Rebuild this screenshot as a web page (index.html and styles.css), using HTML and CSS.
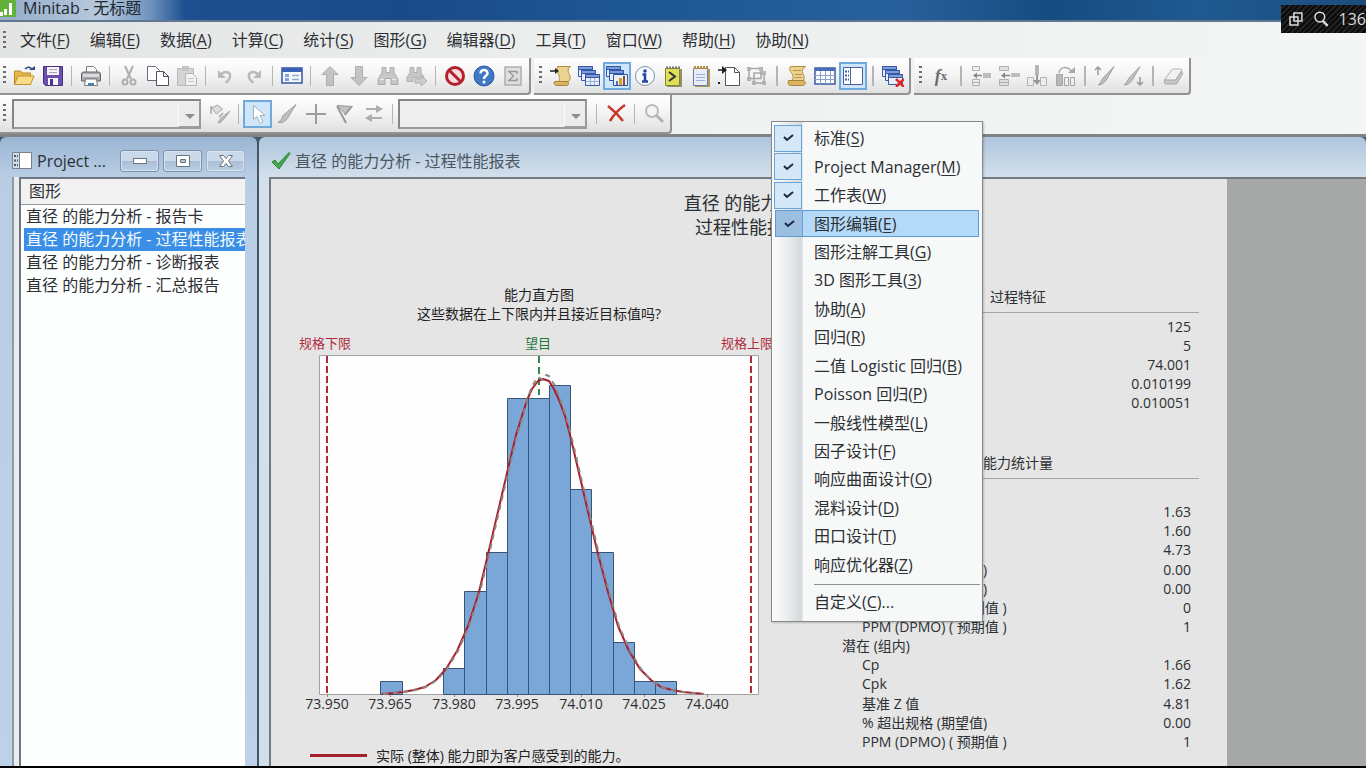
FILE: index.html
```html
<!DOCTYPE html>
<html lang="zh-CN">
<head>
<meta charset="utf-8">
<title>Minitab - 无标题</title>
<link rel="stylesheet" href="styles.css">
</head>
<body>
<header class="titlebar">
  <svg class="logo" width="17" height="20" viewBox="0 0 17 20"><path fill="#62b13c" d="M0 0h16v17H0z"/><path fill="#fff" d="M0 12h3v4H0zM4 9h3v6H4zM9 3h3v12H9z"/></svg>
  <h1 class="app-title">Minitab - 无标题</h1>
</header>

<nav class="menubar grip" aria-label="主菜单">
  <button>文件(<u>F</u>)</button>
  <button>编辑(<u>E</u>)</button>
  <button>数据(<u>A</u>)</button>
  <button>计算(<u>C</u>)</button>
  <button>统计(<u>S</u>)</button>
  <button>图形(<u>G</u>)</button>
  <button>编辑器(<u>D</u>)</button>
  <button>工具(<u>T</u>)</button>
  <button>窗口(<u>W</u>)</button>
  <button>帮助(<u>H</u>)</button>
  <button>协助(<u>N</u>)</button>
</nav>

<div class="dock">
  <div class="dock-row">
    <div class="toolbar wide grip" role="toolbar" aria-label="标准">
      <button class="tool" aria-label="打开"><svg viewBox="0 0 22 22"><path fill="#e9b84d" stroke="#b98527" d="M1.500 19.500V6h6l2 2h8v4"/><path fill="#fbdc86" stroke="#c18f30" d="M1.500 19.500 5 11h16l-3.500 8.500z"/><path fill="none" stroke="#35507f" stroke-width="1.500" d="M12 4c3-3 6-2 7 1"/><path fill="#35507f" d="M16 5h6v-4z"/></svg></button>
      <button class="tool" aria-label="保存"><svg viewBox="0 0 22 22"><path fill="#6a4fae" stroke="#45307f" d="M1.500 1.500h19v19h-17l-2-2z"/><path fill="#f4f4fa" d="M5 2h12v8H5zM6 13h10v7H6z"/><path stroke="#a9a3c4" d="M7 4.500h8M7 7.500h8"/><path fill="#4b368c" d="M8 14h3v6H8z"/></svg></button>
      <span class="sep"></span>
      <button class="tool" aria-label="打印"><svg viewBox="0 0 22 22"><path fill="#fff" stroke="#7c7c80" d="M6.500 8V1.500h7l3 3V8"/><path fill="#a7a8ac" stroke="#66676b" d="M1.500 9q0-2 2-2h15q2 0 2 2v7h-19z"/><path fill="#d9dadd" d="M3 9h16v3H3z"/><path fill="#fff" stroke="#77787c" d="M5.500 14h11l1 6.500h-13z"/><path stroke="#3c83b8" stroke-width="2" d="M8 19h6"/></svg></button>
      <span class="sep"></span>
      <button class="tool off" aria-label="剪切"><svg viewBox="0 0 22 22"><g fill="none" stroke="#a4a4a4" stroke-width="2"><path d="M7 1l6 13M15 1 9 14"/><circle cx="7" cy="17" r="2.500"/><circle cx="15" cy="17" r="2.500"/></g></svg></button>
      <button class="tool" aria-label="复制"><svg viewBox="0 0 22 22"><path fill="#fff" stroke="#686c7a" d="M.500 1.500h8l4 4v10H.500z"/><path fill="#fff" stroke="#4c5160" d="M9.500 6.500h7l5 5v9h-12z"/><path fill="none" stroke="#4c5160" d="M16.500 6.500v5h5"/></svg></button>
      <button class="tool off" aria-label="粘贴"><svg viewBox="0 0 22 22"><path fill="#d0d0d0" stroke="#b2b2b2" d="M1.500 3.500h16v17h-16z"/><path fill="#bdbdbd" d="M6 1h7v5H6z"/><path fill="#f4f4f4" stroke="#ababab" d="M9.500 8.500h7l4 4v8h-11z"/><path stroke="#bbb" d="M12 13.500h6M12 16.500h6"/></svg></button>
      <span class="sep"></span>
      <button class="tool off" aria-label="撤消"><svg viewBox="0 0 22 22"><path fill="none" stroke="#b0b0b0" stroke-width="2.500" d="M6 10c5-5 11-3 10 2-.500 3-3 4-4 6"/><path fill="#b0b0b0" d="M4 5v8h8z"/></svg></button>
      <button class="tool off" aria-label="重做"><svg viewBox="0 0 22 22"><path fill="none" stroke="#b0b0b0" stroke-width="2.500" d="M16 10c-5-5-11-3-10 2 .500 3 3 4 4 6"/><path fill="#b0b0b0" d="M18 5v8h-8z"/></svg></button>
      <span class="sep"></span>
      <button class="tool" aria-label="对话框"><svg viewBox="0 0 22 22"><path fill="#f5f8fd" stroke="#3455a2" stroke-width="1.500" d="M1 3h20v15H1z"/><path fill="#3c60b4" d="M1 3h20v4H1z"/><path stroke="#86a4dc" stroke-width="3" d="M4 10.500h4M4 14.500h4"/><path stroke="#92a8d0" stroke-width="1.500" d="M11 10.500h7M11 14.500h7"/></svg></button>
      <span class="sep"></span>
      <button class="tool off" aria-label="上一个"><svg viewBox="0 0 22 22"><path fill="#bcbcbc" stroke="#a2a2a2" d="M11 1.500l8 8h-4.500v11h-7v-11H3z"/></svg></button>
      <button class="tool off" aria-label="下一个"><svg viewBox="0 0 22 22"><path fill="#bcbcbc" stroke="#a2a2a2" d="M11 20.500l8-8h-4.500v-11h-7v11H3z"/></svg></button>
      <button class="tool off" aria-label="查找"><svg viewBox="0 0 22 22"><path fill="#c0c0c0" stroke="#a0a0a0" d="M5 2.500h4v5h4v-5h4v5l4 7v5h-7v-6H8v6H1v-5l4-7z"/><path stroke="#eee" d="M3 14.500h4M15 14.500h4"/></svg></button>
      <button class="tool off" aria-label="查找下一个"><svg viewBox="0 0 22 22"><path fill="#c0c0c0" stroke="#a5a5a5" d="M4 2.500h4v5h3v-5h4v5l3 5v4h-6v-4H7v4H1v-4l3-5z"/><path fill="#c9c9c9" stroke="#a5a5a5" d="M9 14h6v-3l6 5-6 5v-3H9z"/></svg></button>
      <span class="sep"></span>
      <button class="tool" aria-label="取消"><svg viewBox="0 0 22 22"><circle cx="11" cy="11" r="8.500" fill="#f7dede" stroke="#b3202c" stroke-width="3"/><path stroke="#b3202c" stroke-width="3" d="M5 5l12 12"/></svg></button>
      <button class="tool" aria-label="帮助"><svg viewBox="0 0 22 22"><circle cx="11" cy="11" r="10" fill="#3f78c5" stroke="#2b5799"/><path fill="none" stroke="#fff" stroke-width="2.500" d="M7.500 8.500c0-5 7.500-4.500 7 0-.300 2.300-3.500 2.500-3.500 5.500"/><circle cx="11" cy="17" r="1.500" fill="#fff"/></svg></button>
      <button class="tool off" aria-label="统计指南"><svg viewBox="0 0 22 22"><path fill="#dcdcdc" stroke="#a3a3a3" stroke-width="1.500" d="M3 2h16v18H3z"/><path fill="none" stroke="#8b8b8b" stroke-width="1.500" d="M15 9V6.500H7l4.500 4.500L7 15.500h8V13"/></svg></button>
    </div>
    <div class="toolbar grip" role="toolbar" aria-label="Project Manager">
      <button class="tool" aria-label="会话"><svg viewBox="0 0 22 22"><path fill="#ecd391" stroke="#b08b3d" d="M7.500 1.500h13c-3 2-3 5-1 8 1 3 1 5-1 7h-10c2-3 1-5 0-7-1-3-2-5-1-8z"/><path fill="#d9b563" stroke="#a98335" d="M4.500 16.500h13c2 2 1 4-1 4h-10c-2 0-3-2-2-4z"/><path stroke="#222" stroke-width="1.500" d="M0 6h7"/><path fill="#222" d="M5 3l4 3-4 3z"/></svg></button>
      <button class="tool" aria-label="工作表"><svg viewBox="0 0 22 22"><g fill="#e8effb" stroke="#3558a8"><path d="M.500 1.500h14v10H.500z"/><path fill="#7f9cd8" d="M.500 1.500h14v3H.500z"/><path d="M3.500 5.500h14v10h-14z"/><path fill="#7f9cd8" d="M3.500 5.500h14v3h-14z"/><path d="M7.500 9.500h14v11h-14z"/><path fill="#7f9cd8" d="M7.500 9.500h14v3h-14z"/></g><path stroke="#9ab0dc" d="M8 16.500h13M12.500 13v7M16.500 13v7"/></svg></button>
      <button class="tool on" aria-label="图形"><svg viewBox="0 0 22 22"><g fill="#e8effb" stroke="#2f56a4"><path d="M.500 1.500h14v10H.500z"/><path fill="#7f9cd8" d="M.500 1.500h14v3H.500z"/><path d="M3.500 5.500h14v10h-14z"/><path fill="#7f9cd8" d="M3.500 5.500h14v3h-14z"/><path d="M7.500 9.500h14v11h-14z"/></g><path fill="#4a70c0" d="M10 16h2v4h-2z"/><path fill="#e09b20" d="M13 13h3v7h-3z"/><path fill="#8c5030" d="M17 11h2v9h-2z"/></svg></button>
      <button class="tool" aria-label="信息"><svg viewBox="0 0 22 22"><circle cx="11" cy="11" r="9.500" fill="#f6f9fe" stroke="#8290a9"/><circle cx="11" cy="6" r="1.800" fill="#24459c"/><path fill="none" stroke="#24459c" stroke-width="2.500" d="M8.500 9.500H11V16M8 16.500h6"/></svg></button>
      <button class="tool" aria-label="历史记录"><svg viewBox="0 0 22 22"><path fill="#8f8f6e" d="M5 4h15v18H5z"/><path fill="#dfe05a" stroke="#85852e" d="M3.500 3.500h14v17h-14z"/><path stroke="#777" stroke-width="2" stroke-dasharray="2 1" d="M4 2.500h14"/><path fill="none" stroke="#333" stroke-width="2" d="M7 7l6 4.500L7 16"/></svg></button>
      <button class="tool" aria-label="报表板"><svg viewBox="0 0 22 22"><path fill="#b19a55" d="M5 4h15v18H5z"/><path fill="#e8edf8" stroke="#6c7ca6" d="M3.500 3.500h14v17h-14z"/><path stroke="#b68c36" stroke-width="3" stroke-dasharray="2 1" d="M4 2.500h14"/><path stroke="#9cb0da" d="M6 9.500h9M6 12.500h9M6 15.500h9"/></svg></button>
      <button class="tool" aria-label="相关文档"><svg viewBox="0 0 22 22"><path fill="#fff" stroke="#555" d="M7.500 2.500h9l5 5v13h-14z"/><path fill="none" stroke="#555" d="M16.500 2.500v5h5"/><path stroke="#222" stroke-width="1.500" d="M0 5h6"/><path fill="#222" d="M4 1l5 4-5 4zM0 17h2v2H0z"/></svg></button>
      <button class="tool off" aria-label="组合"><svg viewBox="0 0 22 22"><g fill="none" stroke="#9b9b9b" stroke-width="1.500"><path d="M3 3.500h12v10H3zM8 8h10v10H8z"/></g><path fill="#aaa" d="M1 2h4v4H1zM13 2h4v4h-4zM1 12h4v4H1zM16 6h4v4h-4zM16 16h4v4h-4zM6 16h4v4H6z"/></svg></button>
      <span class="sep"></span>
      <button class="tool" aria-label="显示会话"><svg viewBox="0 0 22 22"><path fill="#ecd391" stroke="#b08b3d" d="M4.500 1.500h15c-3 2-4 5-2 8 1 3 1 5-1 7h-11c2-3 2-5 1-7-2-3-4-5-2-8z"/><path fill="#d9b563" stroke="#a98335" d="M2.500 15.500h15c4 2 1 5-1 5h-12c-2 0-3-3-2-5z"/><path stroke="#b9934a" d="M7 5.500h8M9 9.500h7M9 12.500h7"/></svg></button>
      <button class="tool" aria-label="显示工作表"><svg viewBox="0 0 22 22"><path fill="#fbfcff" stroke="#3b5aa0" stroke-width="1.500" d="M1 3h20v16H1z"/><path fill="#4a6cb6" d="M1 3h20v3H1z"/><path stroke="#8fa2cc" d="M1 10.500h20M1 14.500h20M6.500 6v13M11.500 6v13M16.500 6v13"/></svg></button>
      <button class="tool on" aria-label="显示项目"><svg viewBox="0 0 22 22"><path fill="#fff" stroke="#4a6596" d="M1.500 2.500h19v17h-19z"/><path fill="none" stroke="#4a6596" d="M8.500 2.500v17"/><path stroke="#3b61ae" stroke-width="2" stroke-dasharray="2 1" d="M3 6.500h4M3 10.500h4M3 14.500h4"/></svg></button>
      <span class="sep"></span>
      <button class="tool" aria-label="关闭所有图形"><svg viewBox="0 0 22 22"><g fill="#e8effb" stroke="#3558a8"><path d="M.500 1.500h14v10H.500z"/><path fill="#7f9cd8" d="M.500 1.500h14v3H.500z"/><path d="M3.500 5.500h14v10h-14z"/><path fill="#7f9cd8" d="M3.500 5.500h14v3h-14z"/><path d="M6.500 9.500h14v10h-14z"/><path fill="#7f9cd8" d="M6.500 9.500h14v3h-14z"/></g><path stroke="#dc2a2a" stroke-width="2.500" d="M14 14l8 8M22 14l-8 8"/></svg></button>
    </div>
    <div class="toolbar grip" role="toolbar" aria-label="工作表">
      <button class="tool off fx" aria-label="公式"><i>f</i><sub>x</sub></button>
      <span class="sep"></span>
      <button class="tool off" aria-label="插入单元格"><svg viewBox="0 0 22 22"><path fill="#eee" stroke="#a5a5a5" d="M2.500 1.500h7v4h-7zM2.500 14.500h7v3h-7zM2.500 17.500h7v3h-7z"/><path fill="#b5b5b5" d="M13 8h8v5h-8z"/><path stroke="#777" stroke-width="1.500" d="M5 10.500h7"/><path fill="#777" d="M3 10.500l4-3v6z"/></svg></button>
      <button class="tool off" aria-label="插入行"><svg viewBox="0 0 22 22"><path fill="#ddd" stroke="#a5a5a5" d="M1.500 1.500h9v4h-9zM1.500 14.500h9v6h-9zM1.500 17.500h9"/><path fill="#b5b5b5" d="M13 8h9v4h-9z"/><path stroke="#777" stroke-width="1.500" d="M5 10.500h7"/><path fill="#777" d="M3 10.500l4-3v6z"/></svg></button>
      <button class="tool off" aria-label="插入列"><svg viewBox="0 0 22 22"><path fill="#eee" stroke="#aaa" d="M1.500 12.500h6v8h-6zM14.500 12.500h6v8h-6z"/><path fill="#aaa" d="M9 0h4v10H9z"/><path fill="#888" d="M10 10h2v7h-2zM7 15h8l-4 5z"/></svg></button>
      <button class="tool off" aria-label="移动列"><svg viewBox="0 0 22 22"><path fill="#b0b0b0" stroke="#999" d="M2.500 9.500h6v11h-6z"/><path fill="#eee" stroke="#999" d="M10.500 12.500h4v8h-4zM16.500 12.500h4v8h-4z"/><path fill="none" stroke="#999" stroke-width="1.500" d="M5 8c1-7 9-7 13-1"/><path fill="#999" d="M14 8h7V2z"/></svg></button>
      <span class="sep"></span>
      <button class="tool off" aria-label="上一个刷亮行"><svg viewBox="0 0 22 22"><path fill="#b7b7b7" stroke="#929292" d="M20 1.500l-8 14q-4 5-8 4.500 3-2 5-7z"/><path fill="none" stroke="#8b8b8b" stroke-width="1.500" d="M4 10V2M1 5l3-3 3 3"/></svg></button>
      <button class="tool off" aria-label="下一个刷亮行"><svg viewBox="0 0 22 22"><path fill="#b7b7b7" stroke="#929292" d="M18 1.500l-8 14q-4 5-8 4.500 3-2 5-7z"/><path fill="none" stroke="#8b8b8b" stroke-width="1.500" d="M18 12v8M15 17l3 3 3-3"/></svg></button>
      <span class="sep"></span>
      <button class="tool off" aria-label="清除"><svg viewBox="0 0 22 22"><path fill="#f2f2f2" stroke="#a8a8a8" d="M2.500 15l7-10q1-1 3-1h6q2 0 1 2l-6 10z"/><path fill="#c2c2c2" stroke="#999" d="M2.500 15h11l6-9 1 3-6 10h-11q-2-1-1-4z"/></svg></button>
    </div>
  </div>
  <div class="dock-row">
    <div class="toolbar wide low grip" role="toolbar" aria-label="图形编辑">
      <span class="combo"><select aria-label="图形项"><option></option></select></span>
      <button class="tool off" aria-label="编辑属性"><svg viewBox="0 0 22 22"><path fill="#d8d8d8" stroke="#999" d="M2.500 5l6-3 5 4-6 5z"/><path stroke="#999" stroke-width="1.500" d="M2 3v8M14 10l-4 4"/><path fill="#b5b5b5" stroke="#999" d="M21 8l-6 8q-3 4-6 4l3-5z"/></svg></button>
      <span class="sep"></span>
      <button class="tool on" aria-label="选择"><svg viewBox="0 0 22 22"><path fill="#fff" stroke="#9fb1c4" d="M6.500 2.500v14l3.500-3 3 7 3-1.500-3-6.500h5z"/></svg></button>
      <button class="tool off" aria-label="刷亮"><svg viewBox="0 0 22 22"><path fill="#b7b7b7" stroke="#929292" d="M20 1.500l-8 13q-4 6-10 5 4-2 5-7z"/></svg></button>
      <button class="tool off" aria-label="十字准线"><svg viewBox="0 0 22 22"><path stroke="#8f8f8f" stroke-width="2" d="M11 1v20M1 11h20"/></svg></button>
      <button class="tool off" aria-label="植旗"><svg viewBox="0 0 22 22"><path fill="#b9b9b9" stroke="#8b8b8b" d="M3.500 2.500l15 1-7 8z"/><path stroke="#8b8b8b" stroke-width="2" d="M3 3l9 17M17 4l-6 8"/></svg></button>
      <button class="tool off" aria-label="更新"><svg viewBox="0 0 22 22"><path stroke="#a2a2a2" stroke-width="2" d="M3 6h12M7 15h12"/><path fill="#a2a2a2" d="M13 2l7 4-7 4zM9 11l-7 4 7 4z"/></svg></button>
      <span class="sep"></span>
      <span class="combo"><select aria-label="标签"><option></option></select></span>
      <span class="sep"></span>
      <button class="tool" aria-label="删除"><svg viewBox="0 0 22 22"><path fill="none" stroke="#c9372b" stroke-width="2.500" d="M3 3q8 6 15 15M20 2Q11 8 5 18"/></svg></button>
      <span class="sep"></span>
      <button class="tool off" aria-label="缩放"><svg viewBox="0 0 22 22"><circle cx="9" cy="8" r="6" fill="#f4f4f4" stroke="#b2b2b2" stroke-width="2"/><path stroke="#a9a9a9" stroke-width="3" d="M13 12l7 7"/></svg></button>
    </div>
  </div>
</div>

<main class="workspace">
  <section class="window project" aria-label="Project Manager">
    <div class="caption">
      <svg width="20" height="17" viewBox="0 0 20 17"><path fill="#fff" stroke="#77808c" d="M.500.500h19v16H.500z"/><path fill="#d3dbe4" d="M1 1h6v15H1z"/><path stroke="#77808c" d="M7.500 0v17"/><path stroke="#4d5a6c" stroke-width="2" stroke-dasharray="2 1" d="M2 4h4M2 8.500h4M2 13h4"/></svg>
      <h2>Project ...</h2>
      <button aria-label="最小化"><svg width="16" height="8" viewBox="0 0 16 8"><path fill="#fff" stroke="#69747f" d="M1.500 1.500h13v5h-13z"/></svg></button>
      <button aria-label="最大化"><svg width="16" height="12" viewBox="0 0 16 12"><path fill="#fff" stroke="#69747f" d="M1.500.500h13v11h-13z"/><path fill="#b6c6d8" stroke="#69747f" d="M5.500 4.500h5v3h-5z"/></svg></button>
      <button aria-label="关闭"><svg width="16" height="12" viewBox="0 0 16 12"><path fill="#fff" stroke="#69747f" d="M1.500.500h4L8 3.500 10.500.500h4L10.500 6l4 5.500h-4L8 8.500l-2.500 3h-4l4-5.500z"/></svg></button>
    </div>
    <div class="list-frame">
      <div class="list">
        <h3>图形</h3>
        <ul>
          <li>直径 的能力分析 - 报告卡</li>
          <li class="selected">直径 的能力分析 - 过程性能报表</li>
          <li>直径 的能力分析 - 诊断报表</li>
          <li>直径 的能力分析 - 汇总报告</li>
        </ul>
      </div>
    </div>
  </section>

  <section class="window graph" aria-label="过程性能报表">
    <div class="caption">
      <svg width="20" height="18" viewBox="0 0 20 18"><path fill="#43a84a" stroke="#2c8838" d="M1 10l3-2 3 4L18 .500l1 1L8 17z"/></svg>
      <h2>直径 的能力分析 - 过程性能报表</h2>
    </div>
    <div class="canvas">
      <article class="page">
        <header class="report-title">直径 的能力分析<br>过程性能报表</header>
        <div class="report-body">
          <figure class="chart">
            <figcaption>能力直方图<br>这些数据在上下限内并且接近目标值吗?</figcaption>
            <svg class="plot" width="500" height="380" viewBox="289 333 500 380" role="img" aria-label="能力直方图">
              <g class="limit-text" text-anchor="middle"><text x="325" y="348">规格下限</text><text x="747" y="348">规格上限</text><text class="target-text" x="538" y="348">望目</text></g>
              <path fill="#fdfefd" stroke="#a3a3a3" d="M319.500 355.500h439v339h-439z"/>
              <path stroke="#8a8a8a" d="M327.500 694v3M390.500 694v3M454.500 694v3M517.500 694v3M581.500 694v3M644.500 694v3M707.500 694v3"/>
              <path stroke="#b02a3c" stroke-width="2" stroke-dasharray="7 3" d="M327 356v338M751 356v338"/>
              <path stroke="#2f8a4c" stroke-width="2" stroke-dasharray="7 4" d="M539 356v39"/>
              <g fill="#7ba6d8" stroke="#3a5573">
                <path d="M380.500 681.500h22v13h-22zM443.500 668.500h21v26h-21zM464.500 591.500h22v103h-22zM486.500 552.500h21v142h-21zM507.500 398.500h21v296h-21zM528.500 398.500h21v296h-21zM549.500 385.500h21v309h-21zM570.500 489.500h21v205h-21zM591.500 552.500h22v142h-22zM613.500 642.500h21v52h-21zM634.500 681.500h21v13h-21zM655.500 681.500h21v13h-21z"/>
              </g>
              <path fill="none" stroke="#a81f2c" stroke-width="2" stroke-linejoin="round" d="M382 694L393 693L403 692L414 690L425 687L436 680L446 669L457 651L468 626L479 592L489 550L500 503L511 456L516 435L522 416L527 400L532 389L538 381L543 379L549 381L554 389L559 400L565 416L570 435L575 456L586 503L597 550L608 592L618 626L629 651L640 669L651 680L661 687L672 690L683 692L694 693L704 694"/>
              <path fill="none" stroke="#8e8580" stroke-width="2" stroke-dasharray="5 5" stroke-linejoin="round" d="M383 694L394 693L404 692L415 690L426 687L437 680L447 669L458 651L469 626L480 592L490 550L501 503L512 456L517 435L523 416L527 400L532 386L538 377L543 380L546 375L549 376L555 386L560 399L566 416L571 435L576 456L587 503L598 550L609 592L619 626L630 651L641 669L651 680L661 687L672 690L683 692L694 693L704 694"/>
              <g class="axis-text" text-anchor="middle"><text x="327" y="709">73.950</text><text x="390" y="709">73.965</text><text x="454" y="709">73.980</text><text x="517" y="709">73.995</text><text x="581" y="709">74.010</text><text x="644" y="709">74.025</text><text x="707" y="709">74.040</text></g>
            </svg>
            <p class="legend"><span class="swatch"></span>实际 (整体) 能力即为客户感受到的能力。</p>
          </figure>
          <div class="stats">
            <table>
              <caption>过程特征</caption>
              <tr><td></td><td>125</td></tr>
              <tr><td></td><td>5</td></tr>
              <tr><td></td><td>74.001</td></tr>
              <tr><td></td><td>0.010199</td></tr>
              <tr><td></td><td>0.010051</td></tr>
            </table>
            <table class="capability">
              <caption>能力统计量</caption>
              <tr><td></td><td></td></tr>
              <tr><td></td><td>1.63</td></tr>
              <tr><td></td><td>1.60</td></tr>
              <tr><td></td><td>4.73</td></tr>
              <tr><th>% 超出规格 (观测值)</th><td>0.00</td></tr>
              <tr><th>% 超出规格 (期望值)</th><td>0.00</td></tr>
              <tr><th>PPM (DPMO) ( 观测值 )</th><td>0</td></tr>
              <tr><th>PPM (DPMO) ( 预期值 )</th><td>1</td></tr>
              <tr><th class="group">潜在 (组内)</th><td></td></tr>
              <tr><th>Cp</th><td>1.66</td></tr>
              <tr><th>Cpk</th><td>1.62</td></tr>
              <tr><th>基准 Z 值</th><td>4.81</td></tr>
              <tr><th>% 超出规格 (期望值)</th><td>0.00</td></tr>
              <tr><th>PPM (DPMO) ( 预期值 )</th><td>1</td></tr>
            </table>
          </div>
        </div>
      </article>
    </div>
  </section>
</main>

<div class="popup" role="menu" aria-label="工具栏">
  <div class="popup-items">
    <button role="menuitemcheckbox" aria-checked="true"><span class="check"><svg width="13" height="10" viewBox="0 0 13 10"><path fill="none" stroke="#1c2b40" stroke-width="2" d="M2 4l3 3 6-5"/></svg></span><span>标准(<u>S</u>)</span></button>
    <button role="menuitemcheckbox" aria-checked="true"><span class="check"><svg width="13" height="10" viewBox="0 0 13 10"><path fill="none" stroke="#1c2b40" stroke-width="2" d="M2 4l3 3 6-5"/></svg></span><span>Project Manager(<u>M</u>)</span></button>
    <button role="menuitemcheckbox" aria-checked="true"><span class="check"><svg width="13" height="10" viewBox="0 0 13 10"><path fill="none" stroke="#1c2b40" stroke-width="2" d="M2 4l3 3 6-5"/></svg></span><span>工作表(<u>W</u>)</span></button>
    <button class="hover" role="menuitemcheckbox" aria-checked="true"><span class="check"><svg width="13" height="10" viewBox="0 0 13 10"><path fill="none" stroke="#1c2b40" stroke-width="2" d="M2 4l3 3 6-5"/></svg></span><span>图形编辑(<u>E</u>)</span></button>
    <button role="menuitemcheckbox"><span>图形注解工具(<u>G</u>)</span></button>
    <button role="menuitemcheckbox"><span>3D 图形工具(<u>3</u>)</span></button>
    <button role="menuitemcheckbox"><span>协助(<u>A</u>)</span></button>
    <button role="menuitemcheckbox"><span>回归(<u>R</u>)</span></button>
    <button role="menuitemcheckbox"><span>二值 Logistic 回归(<u>B</u>)</span></button>
    <button role="menuitemcheckbox"><span>Poisson 回归(<u>P</u>)</span></button>
    <button role="menuitemcheckbox"><span>一般线性模型(<u>L</u>)</span></button>
    <button role="menuitemcheckbox"><span>因子设计(<u>F</u>)</span></button>
    <button role="menuitemcheckbox"><span>响应曲面设计(<u>O</u>)</span></button>
    <button role="menuitemcheckbox"><span>混料设计(<u>D</u>)</span></button>
    <button role="menuitemcheckbox"><span>田口设计(<u>T</u>)</span></button>
    <button role="menuitemcheckbox"><span>响应优化器(<u>Z</u>)</span></button>
  </div>
  <hr>
  <button class="customize" role="menuitem"><span>自定义(<u>C</u>)...</span></button>
</div>

<aside class="overlay">
  <svg width="16" height="16" viewBox="0 0 14 14"><path fill="none" stroke="#ddd" stroke-width="1.500" d="M5 1h8v8H5zM1 5h8v8H1z"/></svg>
  <svg width="18" height="18" viewBox="0 0 16 16"><circle cx="7" cy="6" r="5" fill="none" stroke="#ddd" stroke-width="1.500"/><path stroke="#ddd" stroke-width="2.500" d="M10 10l5 5"/></svg>
  <span>136</span>
</aside>
</body>
</html>
```
FILE: styles.css
```css
* { box-sizing: border-box; }

body {
  margin: 0;
  height: 100vh;
  overflow: hidden;
  display: flex;
  flex-direction: column;
  position: relative;
  border-bottom: 2px solid #000;
  background: #f1f2f2;
  color: #2c2f33;
  font: 16px/20px "Open Sans", "Noto Sans CJK SC", sans-serif;
}

button {
  margin: 0;
  padding: 0;
  border: 0;
  background: none;
  color: inherit;
  font: inherit;
  white-space: nowrap;
}

h1, h2, h3, p, ul, figure {
  margin: 0;
  padding: 0;
}

h1, h2, h3 {
  font-size: 16px;
  font-weight: 400;
}

u { text-underline-offset: 2px; }

/* Title bar */
.titlebar {
  flex: none;
  display: flex;
  height: 22px;
  overflow: hidden;
  border-bottom: 2px solid #5f7890;
  background:
    radial-gradient(ellipse at 232px 14px, #8fb9bf 0, #7fa9b800 24px),
    linear-gradient(90deg, #93acc9 0, #b7c9dc 100px, #6f94bd 150px, #1d4f90 185px, #1a4a88 400px, #1d5592 600px, #28609c 900px, #174c80 1050px, #1f5a91 1200px, #1c4c7c);
}

.logo { flex: none; }

.app-title {
  padding-left: 6px;
  color: #20262e;
  line-height: 16px;
}

/* Dotted handle at the left of each bar */
.grip::before {
  content: "";
  flex: none;
  width: 3px;
  height: 19px;
  margin: 0 5px;
  background: repeating-linear-gradient(#6d6d6d 0 2px, transparent 2px 5px);
}

.menubar {
  flex: none;
  display: flex;
  align-items: center;
  gap: 20px;
  height: 36px;
  background: linear-gradient(90deg, #e3e4e4, #ebecec 500px, #f4f5f5);
}

.menubar::before { margin: 0 -6px 0 3px; }

/* Toolbars */
.dock {
  flex: none;
  border-bottom: 3px solid #808387;
  background: linear-gradient(90deg, #e9eaea, #eff1f1 600px, #f4f5f5);
}

.dock-row { display: flex; gap: 3px; }

.toolbar {
  display: flex;
  align-items: center;
  height: 37px;
  padding-right: 2px;
  border-right: 2px solid #929292;
  border-bottom: 2px solid #929292;
  border-radius: 0 0 4px 0;
  background: linear-gradient(#fff, #f3f3f3 50%, #dfe0e0);
}

.toolbar.wide::before { margin: 0 3px; }

.low { height: 39px; }

.tool {
  flex: none;
  display: flex;
  align-items: center;
  justify-content: center;
  width: 28px;
  height: 28px;
}

.wide .tool { width: 29px; }

.tool svg { flex: none; width: 22px; height: 22px; }

.off { opacity: .85; }

.on {
  border: 2px solid #6fa9de;
  background: #cfe6fa;
}

.fx {
  color: #555;
  font: 700 18px/20px "Liberation Serif", serif;
}

.fx sub { font-size: 13px; }

.sep {
  flex: none;
  width: 2px;
  height: 20px;
  margin: 0 5px;
  background: #b5b5b5;
}

.wide .sep { width: 1px; margin: 0 4px; }

.combo {
  position: relative;
  width: 189px;
  height: 30px;
  margin: 0 4px 0 3px;
}

.sep + .combo { margin: 0 5px 0 1px; }

.combo select {
  width: 100%;
  height: 100%;
  appearance: none;
  border: 2px solid #9a9a9a;
  border-top-color: #858585;
  border-left-color: #858585;
  border-radius: 0;
  background: #eeeeee;
}

.combo::after {
  content: "";
  position: absolute;
  right: 6px;
  bottom: 10px;
  border: 5px solid transparent;
  border-top-color: #8d8d8d;
  border-bottom: 0;
}

.combo::before {
  content: "";
  position: absolute;
  inset: 4px 2px 2px auto;
  width: 20px;
  border-left: 1px solid #f9f9f9;
  border-bottom: 1px solid #a0a0a0;
  background: #ececec;
}

/* Document windows */
.workspace {
  flex: 1;
  min-height: 0;
  display: flex;
  gap: 2px;
  background: #435766;
}

.window {
  display: flex;
  flex-direction: column;
  min-height: 0;
  border-radius: 6px 6px 0 0;
}

.caption {
  flex: none;
  display: flex;
  align-items: center;
  height: 40px;
  padding-top: 7px;
}

.project {
  flex: none;
  width: 257px;
  padding: 0 12px;
  background: linear-gradient(#9ab5d3, #b9cee5 40px, #bdd2e9);
}

.project .caption { gap: 4px; }

.project h2 {
  flex: 1;
  padding-left: 1px;
  white-space: nowrap;
}

.project .caption button {
  display: flex;
  align-items: center;
  justify-content: center;
  width: 39px;
  height: 22px;
  border: 1px solid #7e91a8;
  border-radius: 3px;
  background: linear-gradient(#c9d9ea 50%, #a9bfd7 50%, #bdd0e4);
  box-shadow: inset 0 0 0 1px #d7e3f0;
}

.project .caption button:last-child { border-color: #a3b6cc; }

.list-frame {
  flex: 1;
  min-height: 0;
  padding-left: 5px;
  border-left: 2px solid #8e9aa6;
  background: #e9ecef;
}

.list {
  height: 100%;
  border-left: 2px solid #6e7780;
  border-top: 2px solid #6e7780;
  background: #fdfefe;
}

.list h3 {
  height: 26px;
  padding-left: 8px;
  border-bottom: 1px solid #9b9b9b;
  background: #f2f2f2;
  line-height: 25px;
}

.list ul { list-style: none; }

.list li {
  height: 23px;
  margin-left: 3px;
  padding-left: 2px;
  overflow: hidden;
  line-height: 23px;
  white-space: nowrap;
}

.list .selected { background: #3a8ee6; color: #f5faff; }

.graph {
  flex: 1;
  min-width: 0;
  padding-left: 10px;
  background: linear-gradient(#aec5dc, #d3e0ec 40px, #d0dfec);
}

.graph .caption { gap: 4px; padding-left: 2px; color: #4b5661; }

.canvas {
  flex: 1;
  min-height: 0;
  overflow: hidden;
  display: flex;
  border-top: 2px solid #74797d;
  border-left: 2px solid #74797d;
  background: #a6a8a7;
}

.page {
  flex: none;
  width: 956px;
  padding-top: 12px;
  background: #e4e5e4;
}

.report-title {
  text-align: center;
  font-size: 18px;
  line-height: 24px;
}

.report-body {
  display: flex;
  justify-content: space-between;
  padding: 46px 28px 0 18px;
  font-size: 14px;
  line-height: 19px;
}

.chart { width: 500px; color: #1f2123; }

.chart figcaption { text-align: center; }

.plot { display: block; margin-top: 10px; }

.limit-text { fill: #b02a3c; font-size: 13px; }

.target-text { fill: #1e7a3c; }

.axis-text { fill: #2c2f33; font-size: 14px; }

.legend {
  display: flex;
  align-items: center;
  gap: 9px;
  padding: 33px 0 0 21px;
}

.swatch { width: 57px; height: 3px; background: #a4202b; }

/* Statistics column */
.stats { width: 362px; padding-top: 2px; }

.stats table {
  width: 100%;
  border-collapse: collapse;
}

.stats caption {
  height: 26px;
  margin-bottom: 4px;
  border-bottom: 1px solid #a5a5a5;
}

.stats tr { height: 19px; }

.stats th, .stats td {
  padding: 0 8px 0 0;
  text-align: right;
  font-weight: 400;
}

.stats th { padding-left: 25px; text-align: left; }

.stats .group { padding-left: 5px; }

.stats .capability { height: 268px; margin-top: 41px; }

/* Toolbar picker menu */
.popup {
  position: absolute;
  left: 771px;
  top: 121px;
  width: 212px;
  padding: 2px 2px 3px;
  border: 1px solid #85898c;
  background: linear-gradient(90deg, #fcfdfd, #eceeef 14px, #d5d8da 30px, #f7f8f8 31px);
  box-shadow: 1px 1px 2px #0003;
}

.popup-items {
  display: grid;
  grid-auto-rows: 1fr;
  height: 455px;
}

.popup button {
  display: flex;
  align-items: center;
  gap: 12px;
  padding-left: 40px;
  text-align: left;
}

.popup button[aria-checked="true"] { padding-left: 0; }

.check {
  display: flex;
  align-items: center;
  justify-content: center;
  width: 28px;
  height: 27px;
  border: 1px solid #6ba3d6;
  background: #d5e8f8;
}

.popup .hover {
  margin: 1px;
  gap: 11px;
  border: 1px solid #5c9bd6;
  background: #b5d9f8;
}

.hover .check {
  width: 27px;
  height: 100%;
  border-width: 0 1px 0 0;
  background: #9dbfdf;
}

.popup hr {
  margin: 5px 0 0 40px;
  border: 0;
  border-top: 1px solid #8f9294;
}

.popup .customize { height: 33px; }

/* Viewer badge */
.overlay {
  position: absolute;
  top: 5px;
  right: 0;
  display: flex;
  align-items: center;
  gap: 10px;
  width: 85px;
  height: 28px;
  padding-left: 8px;
  overflow: hidden;
  background: repeating-linear-gradient(135deg, #0b0b0b 0 2px, #222 2px 4px);
  color: #d8d8d8;
}
```
